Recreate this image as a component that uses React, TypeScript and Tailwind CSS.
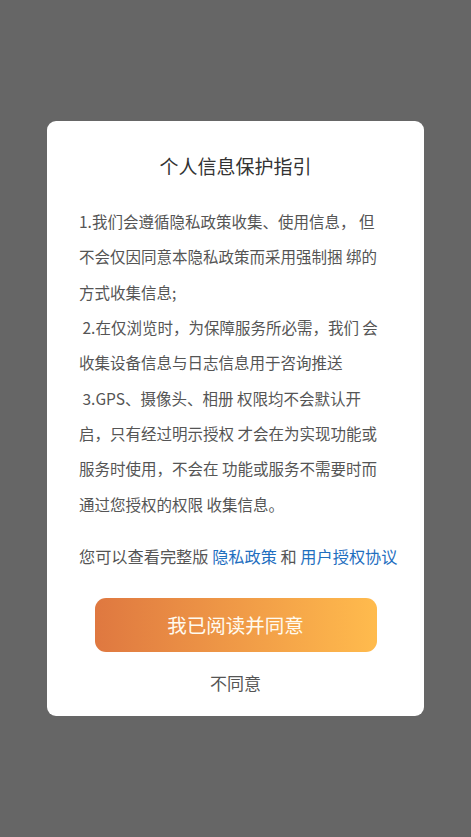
import React from "react";

const FONT = "font-['Noto_Sans_CJK_SC','Noto_Sans',sans-serif]";

const lines: string[][] = [
  [
    "1.我们会遵循隐私政策收集、使用信息， 但",
    "不会仅因同意本隐私政策而采用强制捆 绑的",
    "方式收集信息;",
  ],
  [" 2.在仅浏览时，为保障服务所必需，我们 会", "收集设备信息与日志信息用于咨询推送"],
  [
    " 3.GPS、摄像头、相册 权限均不会默认开",
    "启，只有经过明示授权 才会在为实现功能或",
    "服务时使用，不会在 功能或服务不需要时而",
    "通过您授权的权限 收集信息。",
  ],
];

export default function App() {
  return (
    <div className={`min-h-[837px] w-full bg-[#666666] flex items-center justify-center ${FONT}`}>
      <div className="w-[377px] bg-white rounded-[9px] pt-[31px] pb-[21px] px-[32px] flex flex-col">
        <h1 className="text-center text-[19px] leading-[28px] text-[#333333] font-normal">
          个人信息保护指引
        </h1>
        <div className="mt-[24px] text-[15.5px] leading-[35.3px] text-[#555555]">
          {lines.flat().map((l, i) => (
            <div key={i} className="whitespace-pre">
              {l}
            </div>
          ))}
        </div>
        <div className="mt-[17px] text-[16.2px] leading-[35px] text-[#555555] whitespace-nowrap">
          您可以查看完整版 <span className="text-[#1f6fbf]">隐私政策</span> 和{" "}
          <span className="text-[#1f6fbf]">用户授权协议</span>
        </div>
        <button className="mt-[24px] mx-auto w-[282px] h-[54px] rounded-[11px] bg-gradient-to-r from-[#df7840] to-[#ffbb4d] text-[19.5px] text-[#fffaf0]">
          我已阅读并同意
        </button>
        <button className="mt-[19px] h-[24px] text-[17px] leading-[24px] text-[#555555]">
          不同意
        </button>
      </div>
    </div>
  );
}
